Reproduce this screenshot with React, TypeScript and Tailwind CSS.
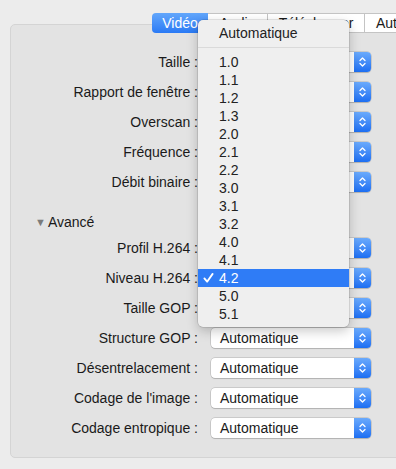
import React from "react";

const TOP_ROWS = ["Taille :", "Rapport de fenêtre :", "Overscan :", "Fréquence :", "Débit binaire :"];
const ADV_ROWS = [
  "Profil H.264 :",
  "Niveau H.264 :",
  "Taille GOP :",
  "Structure GOP :",
  "Désentrelacement :",
  "Codage de l'image :",
  "Codage entropique :",
];
const LEVELS = ["1.0", "1.1", "1.2", "1.3", "2.0", "2.1", "2.2", "3.0", "3.1", "3.2", "4.0", "4.1", "4.2", "5.0", "5.1"];

function Stepper() {
  return (
    <div className="flex h-full w-[17px] items-center justify-center rounded-r-[4px] bg-gradient-to-b from-[#6aaafc] to-[#1c6ef2]">
      <svg viewBox="0 0 9 12" className="h-[12px] w-[9px]">
        <path d="M2 4.5L4.5 2L7 4.5M2 7.5L4.5 10L7 7.5" fill="none" stroke="white" strokeWidth="1.3" strokeLinecap="round" strokeLinejoin="round" />
      </svg>
    </div>
  );
}

function Popup({ text }: { text: string }) {
  return (
    <div className="flex h-[20px] w-[160px] items-stretch rounded-[4px] bg-white shadow-[0_0_0_0.5px_rgba(0,0,0,0.22),0_1px_1px_rgba(0,0,0,0.12)]">
      <div className="flex-1 pl-[9px] leading-[20px] text-[#1a1a1a]">{text}</div>
      <Stepper />
    </div>
  );
}

function Row({ label, value }: { label: string; value: string }) {
  return (
    <div className="flex h-[20px] items-center">
      <div className="w-[188px] pr-[1px] text-right text-[#1a1a1a]">{label}</div>
      <div className="ml-[12px]">
        <Popup text={value} />
      </div>
    </div>
  );
}

export default function App() {
  return (
    <div
      className="relative h-[469px] w-[396px] overflow-hidden bg-[#ececec] pt-[13px] text-[14px]"
      style={{ fontFamily: '"Liberation Sans", Arial, sans-serif' }}
    >
      {/* segmented tabs */}
      <div className="relative z-10 ml-[152px] flex h-[20px] w-[300px]">
        <div className="flex w-[56px] items-center justify-center rounded-l-[4px] bg-gradient-to-b from-[#62a6fb] to-[#2a7af5] text-white">
          Vidéo
        </div>
        <div className="flex w-[60px] items-center justify-center border-y border-r border-[#c4c4c4] bg-white text-[#1a1a1a]">
          Audio
        </div>
        <div className="flex w-[97px] items-center justify-center border-y border-r border-[#c4c4c4] bg-white text-[#1a1a1a]">
          Télécharger
        </div>
        <div className="flex w-[87px] items-center border-y border-[#c4c4c4] bg-white pl-[11px] text-[#1a1a1a]">
          Autres
        </div>
      </div>

      {/* group box */}
      <div className="ml-[10px] mt-[-9px] h-[434px] w-[400px] rounded-[5px] border border-[#d4d4d4] bg-[#e3e3e3] pt-[27px]">
        <div className="flex flex-col gap-[10px]">
          {TOP_ROWS.map((l) => (
            <Row key={l} label={l} value="Automatique" />
          ))}
        </div>
        <div className="mt-[21px] flex h-[18px] items-center pl-[24px] text-[#1a1a1a]">
          <span className="mr-[2px] text-[11px] text-[#7b7b7b]">▼</span>
          Avancé
        </div>
        <div className="mt-[7px] flex flex-col gap-[10px]">
          {ADV_ROWS.map((l) => (
            <Row key={l} label={l} value="Automatique" />
          ))}
        </div>
      </div>

      {/* open popup menu */}
      <div className="absolute left-[198px] top-[20px] z-20 w-[151px] rounded-[5px] bg-[#efefef] py-[4px] text-[#222] shadow-[0_0_0_0.5px_rgba(0,0,0,0.18),0_4px_12px_rgba(0,0,0,0.22)]">
        <div className="h-[18px] pl-[21px] leading-[18px]">Automatique</div>
        <div className="flex h-[11px] items-center">
          <div className="h-px w-full bg-[#dadada]" />
        </div>
        {LEVELS.map((v) => {
          const on = v === "4.2";
          return (
            <div
              key={v}
              className={
                on
                  ? "relative h-[18px] bg-[#2f7cf6] pl-[21px] leading-[18px] text-white"
                  : "relative h-[18px] pl-[21px] leading-[18px]"
              }
            >
              {on && (
                <svg viewBox="0 0 12 12" className="absolute left-[5px] top-[3px] h-[12px] w-[11px]">
                  <path d="M1.5 6.5L4.5 10L10.5 1.5" fill="none" stroke="white" strokeWidth="2" strokeLinecap="round" strokeLinejoin="round" />
                </svg>
              )}
              {v}
            </div>
          );
        })}
      </div>
    </div>
  );
}
